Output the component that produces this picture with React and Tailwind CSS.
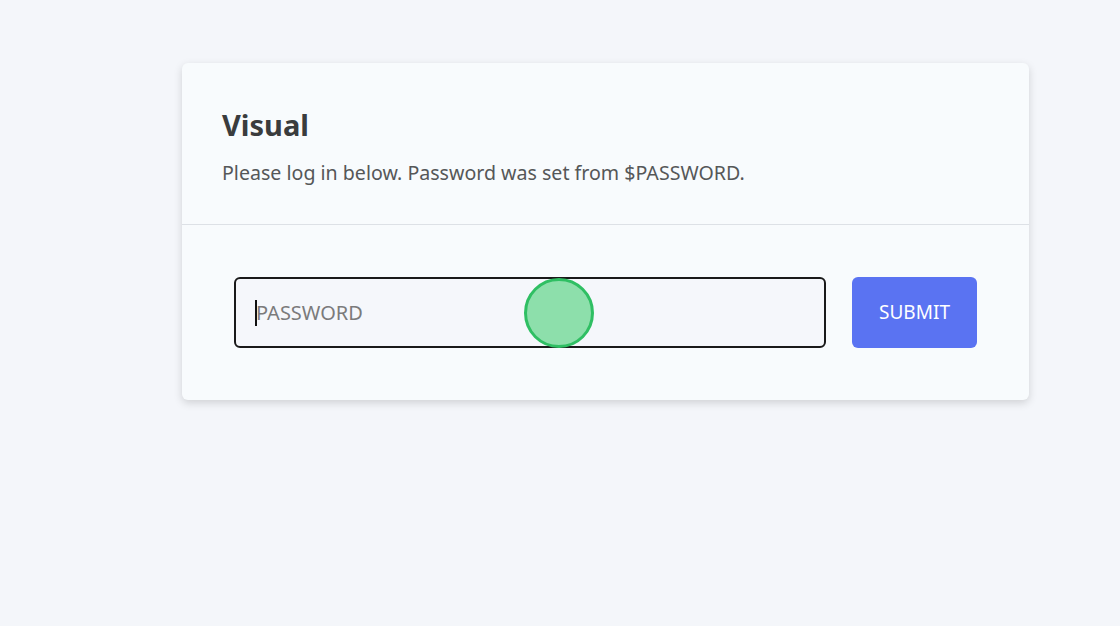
import React from 'react';

const App = () => {
  return (
    <div className="min-h-[626px] w-full bg-[#f4f6fa] pt-[63px] pl-[182px]" style={{ fontFamily: '"Noto Sans", "Open Sans", sans-serif' }}>
      <div className="w-[847px] rounded-md bg-[#f8fbfd] shadow-[0_3px_8px_rgba(0,0,0,0.15)]">
        {/* header */}
        <div className="px-10 pt-[42px] pb-[37px] border-b border-[#dde1e6]">
          <h1 className="text-[29px] leading-[40px] font-bold text-[#3a3c3d]">Visual</h1>
          <p className="mt-[14px] text-[19.6px] leading-[28px] text-[#555758]">
            Please log in below. Password was set from $PASSWORD.
          </p>
        </div>

        {/* login form */}
        <div className="flex items-center gap-[26px] p-[52px]">
          <div className="relative flex-1">
            <input
              type="password"
              placeholder="PASSWORD"
              className="h-[71px] w-full rounded-md border-2 border-[#1a1a1a] bg-[#f5f7fb] px-5 text-[20px] text-[#333] placeholder:text-[#7b7b7b] outline-none"
            />
            <span className="absolute left-[21px] top-[23px] h-[26px] w-[2px] bg-[#111]" />
            <span className="absolute left-[290px] top-[1px] h-[70px] w-[70px] rounded-full border-[3px] border-[#2fbf63] bg-[#8ddfab]" />
          </div>
          <button className="h-[71px] w-[125px] rounded-md bg-[#5a73f2] text-[19px] text-white">
            SUBMIT
          </button>
        </div>
      </div>
    </div>
  );
};

export default App;
